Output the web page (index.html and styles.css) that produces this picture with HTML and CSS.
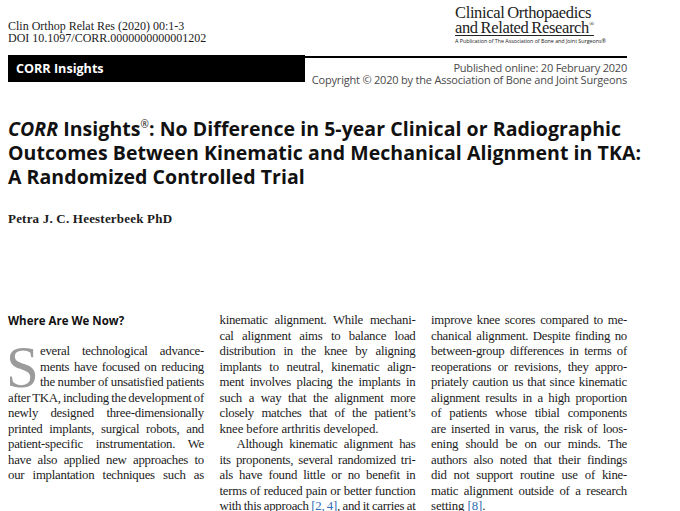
FILE: index.html
```html
<!DOCTYPE html>
<html lang="en">
<head>
<meta charset="utf-8">
<title>CORR Insights</title>
<link rel="stylesheet" href="styles.css">
</head>
<body>
<div class="page">
  <header class="masthead">
    <div class="citation">
      <div>Clin Orthop Relat Res (2020) 00:1-3</div>
      <div>DOI 10.1097/CORR.0000000000001202</div>
    </div>
    <div class="logo">
      <div class="logo-line">Clinical Orthopaedics</div>
      <div class="logo-line"><span class="logo-under">and Related Research<sup class="logo-reg">®</sup></span></div>
      <div class="logo-sub">A Publication of The Association of Bone and Joint Surgeons®</div>
    </div>
  </header>

  <div class="bar-row">
    <div class="section-tag">CORR Insights</div>
    <div class="pubinfo">
      <div>Published online: 20 February 2020</div>
      <div>Copyright © 2020 by the Association of Bone and Joint Surgeons</div>
    </div>
  </div>

  <h1 class="title"><em>CORR</em> Insights<sup class="title-reg">®</sup>: No Difference in 5-year Clinical or Radiographic<br>Outcomes Between Kinematic and Mechanical Alignment in TKA:<br>A Randomized Controlled Trial</h1>

  <div class="author">Petra J. C. Heesterbeek PhD</div>

  <div class="columns">
    <div class="col">
      <h2 class="section-head">Where Are We Now?</h2>
      <span class="dropcap">S</span>
      <div class="ln">everal technological advance-</div>
      <div class="ln">ments have focused on reducing</div>
      <div class="ln">the number of unsatisfied patients</div>
      <div class="ln">after TKA, including the development of</div>
      <div class="ln">newly designed three-dimensionally</div>
      <div class="ln">printed implants, surgical robots, and</div>
      <div class="ln">patient-specific instrumentation. We</div>
      <div class="ln">have also applied new approaches to</div>
      <div class="ln">our implantation techniques such as</div>
    </div>
    <div class="col">
      <div class="ln">kinematic alignment. While mechani-</div>
      <div class="ln">cal alignment aims to balance load</div>
      <div class="ln">distribution in the knee by aligning</div>
      <div class="ln">implants to neutral, kinematic align-</div>
      <div class="ln">ment involves placing the implants in</div>
      <div class="ln">such a way that the alignment more</div>
      <div class="ln">closely matches that of the patient’s</div>
      <div class="ln last">knee before arthritis developed.</div>
      <div class="ln indent">Although kinematic alignment has</div>
      <div class="ln">its proponents, several randomized tri-</div>
      <div class="ln">als have found little or no benefit in</div>
      <div class="ln">terms of reduced pain or better function</div>
      <div class="ln">with this approach <span class="ref">[2, 4]</span>, and it carries at</div>
    </div>
    <div class="col">
      <div class="ln">improve knee scores compared to me-</div>
      <div class="ln">chanical alignment. Despite finding no</div>
      <div class="ln">between-group differences in terms of</div>
      <div class="ln">reoperations or revisions, they appro-</div>
      <div class="ln">priately caution us that since kinematic</div>
      <div class="ln">alignment results in a high proportion</div>
      <div class="ln">of patients whose tibial components</div>
      <div class="ln">are inserted in varus, the risk of loos-</div>
      <div class="ln">ening should be on our minds. The</div>
      <div class="ln">authors also noted that their findings</div>
      <div class="ln">did not support routine use of kine-</div>
      <div class="ln">matic alignment outside of a research</div>
      <div class="ln last">setting <span class="ref">[8]</span>.</div>
    </div>
  </div>
</div>
</body>
</html>
```

FILE: styles.css
```css
html, body {
  margin: 0;
  padding: 0;
  background: #ffffff;
}

body {
  color: #1c1c1c;
  font-family: "Liberation Serif", "Times New Roman", serif;
  overflow: hidden;
}

.page {
  width: 619px;
  margin-left: 8px;
}

/* ---------- masthead ---------- */
.masthead {
  display: flex;
  justify-content: space-between;
  align-items: flex-start;
  height: 55px;
}

.citation {
  padding-top: 21px;
  font-size: 12px;
  line-height: 11.6px;
  color: #1c1c1c;
}

.logo {
  width: 172px;
  padding-top: 5px;
  color: #222;
}

.logo-line {
  font-family: "Liberation Serif", serif;
  font-size: 16.5px;
  line-height: 15px;
  letter-spacing: -0.35px;
  word-spacing: -1px;
  white-space: nowrap;
}

.logo-under {
  text-decoration: underline;
  text-decoration-thickness: 1px;
  text-underline-offset: 2px;
  padding-right: 3px;
}

.logo-reg {
  font-size: 7px;
  vertical-align: 7px;
  line-height: 0;
}

.logo-sub {
  margin-top: 3px;
  font-family: "Open Sans", sans-serif;
  font-size: 5.4px;
  line-height: 6px;
  white-space: nowrap;
  letter-spacing: -0.05px;
}

/* ---------- bar row ---------- */
.bar-row {
  display: flex;
  height: 27px;
}

.section-tag {
  width: 297px;
  height: 27px;
  box-sizing: border-box;
  padding-left: 8px;
  background: #000;
  color: #fff;
  font-family: "Open Sans", sans-serif;
  font-weight: 700;
  font-size: 12.6px;
  line-height: 27px;
}

.pubinfo {
  flex: 1;
  margin-top: 1px;
  border-top: 2px solid #000;
  padding-top: 3.5px;
  text-align: right;
  font-family: "Open Sans", sans-serif;
  font-size: 11px;
  letter-spacing: -0.2px;
  line-height: 12.7px;
  color: #4a4a4a;
  white-space: nowrap;
}

/* ---------- title ---------- */
.title {
  margin: 35px 0 0;
  font-family: "Open Sans", sans-serif;
  font-weight: 700;
  font-size: 19.5px;
  line-height: 24px;
  letter-spacing: 0.05px;
  color: #111;
  white-space: nowrap;
}

.title em {
  font-style: italic;
}

.title-reg {
  font-size: 10px;
  vertical-align: 8px;
  line-height: 0;
  font-weight: 400;
}

.author {
  margin-top: 22.4px;
  font-family: "Liberation Serif", serif;
  font-weight: 700;
  font-size: 13px;
  line-height: 16px;
  letter-spacing: 0.2px;
  color: #1c1c1c;
}

/* ---------- columns ---------- */
.columns {
  display: grid;
  grid-template-columns: 196px 196px 196px;
  column-gap: 15.5px;
  margin-top: 85.7px;
  font-size: 12.8px;
  line-height: 15.5px;
  letter-spacing: -0.25px;
  word-spacing: -1.5px;
}

.section-head {
  margin: 0 0 15.5px;
  font-family: "Open Sans", sans-serif;
  font-weight: 700;
  font-size: 11.5px;
  line-height: 15.5px;
  letter-spacing: 0;
  word-spacing: 0;
  color: #111;
}

.dropcap {
  float: left;
  width: 34px;
  height: 46.5px;
  margin-left: -2px;
  font-size: 59px;
  line-height: 46px;
  letter-spacing: 0;
  color: #9b9b9b;
}

.ln {
  text-align: justify;
  text-align-last: justify;
}

.ln.last {
  text-align: left;
  text-align-last: left;
  letter-spacing: -0.1px;
  word-spacing: 0;
}

.ln.indent {
  text-indent: 17px;
}

.ref {
  color: #2f6db5;
}
```
